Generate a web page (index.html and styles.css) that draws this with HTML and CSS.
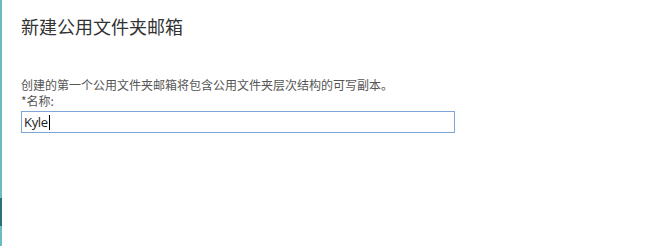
FILE: index.html
```html
<!DOCTYPE html>
<html lang="zh-CN">
<head>
<meta charset="utf-8">
<title>新建公用文件夹邮箱</title>
<link rel="stylesheet" href="styles.css">
</head>
<body>
<div class="frame">
  <div class="edge-mark"></div>
  <div class="dialog">
    <h1 class="title">新建公用文件夹邮箱</h1>
    <p class="desc">创建的第一个公用文件夹邮箱将包含公用文件夹层次结构的可写副本。</p>
    <label class="label" for="name">*名称:</label>
    <div class="field"><span class="value">Kyle</span><span class="caret"></span></div>
  </div>
</div>
</body>
</html>
```
FILE: styles.css
```css
html, body {
  margin: 0;
  padding: 0;
  background: #ffffff;
}
.frame {
  position: relative;
  width: 651px;
  height: 246px;
  box-sizing: border-box;
  border-left: 2px solid #6bbcc0;
  font-family: "Liberation Sans", "Noto Sans CJK SC", sans-serif;
}
.edge-mark {
  position: absolute;
  left: -2px;
  top: 198px;
  width: 2px;
  height: 28px;
  background: #2f6f73;
}
.dialog {
  padding: 14px 0 0 19px;
  display: flex;
  flex-direction: column;
}
.title {
  margin: 0;
  font-size: 18px;
  font-weight: normal;
  color: #333333;
  line-height: 24px;
  font-family: "Noto Sans CJK SC", sans-serif;
}
.desc {
  margin: 39px 0 0 0;
  font-size: 12px;
  line-height: 16px;
  color: #555555;
  font-family: "Noto Sans CJK SC", sans-serif;
}
.label {
  font-size: 12px;
  line-height: 16px;
  color: #555555;
  font-family: "Noto Sans CJK SC", sans-serif;
}
.field {
  margin-top: 2px;
  width: 434px;
  height: 22px;
  box-sizing: border-box;
  border: 1px solid #7ea6d4;
  display: flex;
  align-items: center;
  padding-left: 2px;
}
.value {
  font-size: 13px;
  color: #222222;
  font-family: "Open Sans", sans-serif;
  letter-spacing: -0.3px;
}
.caret {
  display: inline-block;
  width: 1px;
  height: 15px;
  background: #000;
  margin-left: 1px;
}
```
